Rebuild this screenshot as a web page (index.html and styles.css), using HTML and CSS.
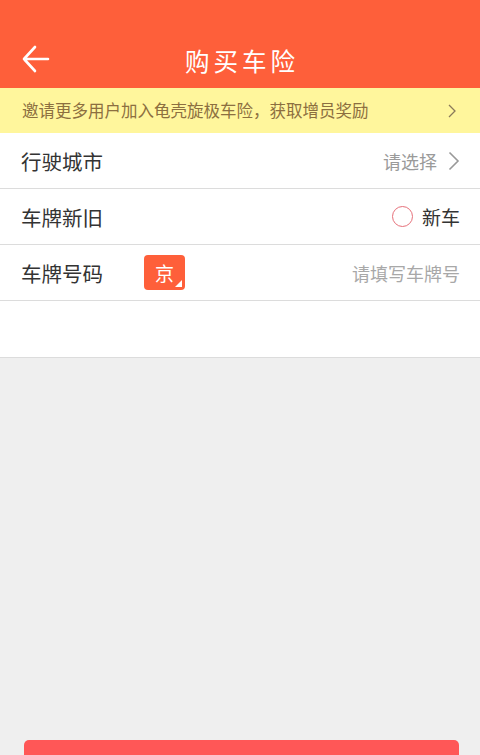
FILE: index.html
```html
<!DOCTYPE html>
<html lang="zh-CN">
<head>
<meta charset="utf-8">
<title>购买车险</title>
<link rel="stylesheet" href="styles.css">
</head>
<body>
<div class="page">
  <header class="header">
    <div class="nav">
      <svg class="back" width="30" height="28" viewBox="0 0 30 28">
        <path d="M27 14 H3 M14 2 L3 14 L14 26" fill="none" stroke="#fff" stroke-width="2.6" stroke-linecap="round" stroke-linejoin="round"/>
      </svg>
      <h1 class="title">购买车险</h1>
    </div>
  </header>
  <div class="notice">
    <span class="notice-text">邀请更多用户加入龟壳旋极车险，获取增员奖励</span>
    <svg class="notice-arrow" width="8" height="14" viewBox="0 0 8 14"><path d="M1 1 L7 7 L1 13" fill="none" stroke="#8a7a5a" stroke-width="1.3"/></svg>
  </div>
  <div class="form">
    <div class="row">
      <span class="label">行驶城市</span>
      <span class="right">
        <span class="hint">请选择</span>
        <svg class="chev" width="12" height="20" viewBox="0 0 12 20"><path d="M1.5 1.5 L10 10 L1.5 18.5" fill="none" stroke="#999" stroke-width="1.6"/></svg>
      </span>
    </div>
    <div class="row">
      <span class="label">车牌新旧</span>
      <span class="right">
        <span class="radio"></span>
        <span class="value">新车</span>
      </span>
    </div>
    <div class="row">
      <span class="label">车牌号码</span>
      <span class="prov">京</span>
      <span class="placeholder">请填写车牌号</span>
    </div>
    <div class="row blank"></div>
  </div>
  <div class="rest">
    <button class="submit">下一步</button>
  </div>
</div>
</body>
</html>
```
FILE: styles.css
```css
html, body {
  margin: 0;
  padding: 0;
  height: 755px;
  overflow: hidden;
  background: #efefef;
  font-family: "Noto Sans CJK SC", "Noto Sans", sans-serif;
}
.page {
  display: flex;
  flex-direction: column;
  width: 480px;
}
.header {
  background: #fe5f3a;
  padding-top: 34px;
  height: 54px;
}
.nav {
  position: relative;
  height: 54px;
  display: flex;
  align-items: center;
  justify-content: center;
}
.back {
  position: absolute;
  left: 21px;
  top: 11px;
}
.title {
  margin: 0;
  color: #fff;
  font-size: 24.5px;
  font-weight: normal;
  letter-spacing: 4px;
  padding-left: 4px;
  line-height: 54px;
}
.notice {
  background: #fff69c;
  height: 45px;
  display: flex;
  align-items: center;
  justify-content: space-between;
  padding: 0 24px 0 22px;
}
.notice-text {
  color: #8c6f40;
  font-size: 16.5px;
  line-height: 45px;
}
.notice-arrow {
  display: block;
}
.form {
  background: #fff;
}
.row {
  height: 55px;
  border-bottom: 1px solid #dcdcdc;
  display: flex;
  align-items: center;
  padding: 0 20px 0 21px;
}
.row.blank {
  height: 56px;
}
.label {
  font-size: 20.5px;
  color: #333;
}
.right {
  margin-left: auto;
  display: flex;
  align-items: center;
}
.hint {
  font-size: 18px;
  color: #9a9a9a;
  margin-right: 11px;
}
.chev { display: block; }
.radio {
  width: 19px;
  height: 19px;
  border: 1.6px solid #e6707a;
  border-radius: 50%;
  margin-right: 9px;
}
.value {
  font-size: 19px;
  color: #333;
}
.prov {
  position: relative;
  margin-left: 41px;
  width: 41px;
  height: 35px;
  border-radius: 4px;
  background: #fe5f3a;
  color: #fff;
  font-size: 19px;
  display: flex;
  align-items: center;
  justify-content: center;
}
.prov::after {
  content: "";
  position: absolute;
  right: 3px;
  bottom: 3px;
  width: 0;
  height: 0;
  border-left: 7px solid transparent;
  border-bottom: 7px solid #fff;
}
.placeholder {
  margin-left: auto;
  font-size: 18px;
  color: #a8a8a8;
}
.rest {
  padding: 382px 21px 0 24px;
}
.submit {
  display: block;
  width: 100%;
  height: 64px;
  border: none;
  border-radius: 5px;
  background: #ff5757;
  color: #fff;
  font-family: inherit;
  font-size: 20px;
  line-height: 28px;
  padding: 32px 0 4px;
}
```
